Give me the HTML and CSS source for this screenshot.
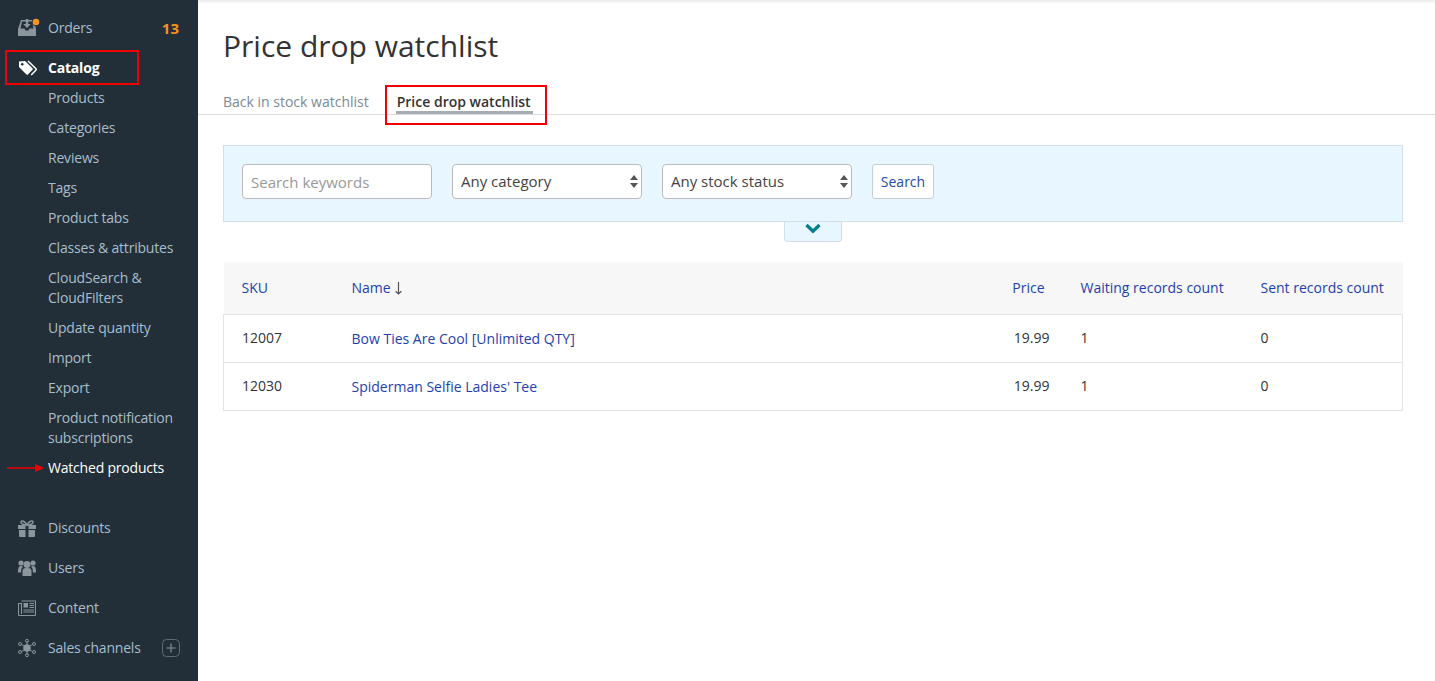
FILE: index.html
```html
<!DOCTYPE html>
<html lang="en">
<head>
<meta charset="UTF-8" />
<title>Price drop watchlist</title>
<link rel="stylesheet" href="styles.css">
</head>
<body>

<div class="layout">
  <nav class="sidebar">
    <div class="nav-item">
      <span class="nav-icon">
        <svg width="22" height="20" viewBox="0 0 22 20"><path fill="#8a959c" d="M0 18V11L3 2H16L18 11V18Z"/><path fill="#232f38" d="M4 3.500H14L15.500 10.500H11.500L10.500 12.500H7.500L6.500 10.500H2.500Z"/><path fill="#8a959c" d="M7.800 1H10.200V6H12.800L9 10 5.200 6H7.800Z"/><circle cx="18" cy="4" r="4.300" fill="#232f38"/><circle cx="18" cy="4" r="3.300" fill="#f7931e"/></svg>
      </span>
      <span>Orders</span>
      <span class="nav-count">13</span>
    </div>
    <div class="nav-item active">
      <span class="nav-icon">
        <svg width="20" height="16" viewBox="0 0 20 16"><path fill="#fff" d="M1 1.500 7 1l7.500 7.300a1 1 0 0 1 0 1.400l-4.600 4.800a1 1 0 0 1-1.400 0L1 7z"/><path fill="none" stroke="#fff" stroke-width="1.500" d="M10 1l8 7.700a1 1 0 0 1 0 1.300l-4.800 5"/><circle cx="4.200" cy="4.300" r="1.300" fill="#232f38"/></svg>
      </span>
      <span>Catalog</span>
    </div>
    <ul class="subnav">
      <li>Products</li>
      <li>Categories</li>
      <li>Reviews</li>
      <li>Tags</li>
      <li>Product tabs</li>
      <li>Classes &amp; attributes</li>
      <li>CloudSearch &amp; CloudFilters</li>
      <li>Update quantity</li>
      <li>Import</li>
      <li>Export</li>
      <li>Product notification subscriptions</li>
      <li class="current">Watched products</li>
    </ul>
    <div class="nav-item">
      <span class="nav-icon">
        <svg width="18" height="17" viewBox="0 0 18 17"><path fill="#8a959c" d="M0 5h7.500v4H0z M10.500 5H18v4h-7.500z M1 10h6.500v7H2a1 1 0 0 1-1-1z M10.500 10H17v6a1 1 0 0 1-1 1h-5.500z"/><path fill="none" stroke="#8a959c" stroke-width="1.500" d="M9 5C7 1 3.500 0 3 2s3 3 6 3c3 0 6.500-1 6-3S11 1 9 5z"/></svg>
      </span>
      <span>Discounts</span>
    </div>
    <div class="nav-item">
      <span class="nav-icon">
        <svg width="18" height="16" viewBox="0 0 18 16"><g fill="#8a959c"><circle cx="9" cy="4.500" r="3.500"/><circle cx="3" cy="3" r="2.600"/><circle cx="15" cy="3" r="2.600"/><path d="M4.500 16V11c0-1.800 1.500-3 3-3h3c1.500 0 3 1.200 3 3v5z"/><path d="M0 10.500C0 8 1 6 3 6c.8 0 1.500.3 2 .8-1 .7-1.800 2.200-1.800 3.700v2H0z"/><path d="M18 10.500C18 8 17 6 15 6c-.8 0-1.500.3-2 .8 1 .7 1.800 2.200 1.800 3.700v2H18z"/></g></svg>
      </span>
      <span>Users</span>
    </div>
    <div class="nav-item">
      <span class="nav-icon">
        <svg width="18" height="16" viewBox="0 0 18 16"><path fill="none" stroke="#8a959c" stroke-width="1.100" d="M3.500 1H17.500V14.500a1 1 0 0 1-1 1H1.500a1 1 0 0 1-1-1V3.500H3.500V14"/><path fill="#8a959c" d="M5.500 3H10v4.500H5.500z M11.500 3h4.500v1h-4.500z M11.500 5h4.500v1h-4.500z M11.500 7h4.500v1h-4.500z M5.500 9.500H16v1H5.500z M5.500 11.500H16v1H5.500z"/></svg>
      </span>
      <span>Content</span>
    </div>
    <div class="nav-item">
      <span class="nav-icon">
        <svg width="18" height="18" viewBox="0 0 18 18"><g stroke="#8a959c" stroke-width="1" fill="none"><path d="M9 9 9 2M9 9 9 16M9 9 3 5M9 9 15 5M9 9 3 13M9 9 15 13"/><circle cx="9" cy="1.800" r="1.500"/><circle cx="9" cy="16.200" r="1.500"/><circle cx="2" cy="5" r="1.500"/><circle cx="16" cy="5" r="1.500"/><circle cx="2" cy="13" r="1.500"/><circle cx="16" cy="13" r="1.500"/></g><circle cx="9" cy="9" r="3.800" fill="#8a959c"/></svg>
      </span>
      <span>Sales channels</span>
      <span class="nav-plus">
        <svg width="18" height="18" viewBox="0 0 18 18"><rect x=".5" y=".5" width="17" height="17" rx="4" fill="none" stroke="#5f6b73"/><path stroke="#6c7780" stroke-width="1.600" d="M9 4.500v9M4.500 9h9"/></svg>
      </span>
    </div>
  </nav>

  <main class="content">
    <h1 class="page-title">Price drop watchlist</h1>
    <div class="tabs">
      <a class="tab">Back in stock watchlist</a>
      <a class="tab tab-active">Price drop watchlist</a>
    </div>

    <div class="filters">
      <input class="field" type="text" placeholder="Search keywords">
      <div class="field select">Any category<span class="select-arrows"></span></div>
      <div class="field select">Any stock status<span class="select-arrows"></span></div>
      <button class="btn-search">Search</button>
    </div>
    <div class="filters-toggle">
      <svg width="16" height="11" viewBox="0 0 16 11"><path fill="none" stroke="#047d90" stroke-width="3.200" d="M1.500 2 8 8.200 14.500 2"/></svg>
    </div>

    <table class="data">
      <thead>
        <tr>
          <th class="col-sku">SKU</th>
          <th class="col-name">Name <svg class="sort-arrow" width="7" height="13" viewBox="0 0 7 13"><path fill="none" stroke="#555" stroke-width="1.200" d="M3.500 0v12M.6 9.200 3.500 12 6.400 9.200"/></svg></th>
          <th class="col-price">Price</th>
          <th class="col-wait">Waiting records count</th>
          <th class="col-sent">Sent records count</th>
        </tr>
      </thead>
      <tbody>
        <tr>
          <td>12007</td>
          <td class="link-cell"><a>Bow Ties Are Cool [Unlimited QTY]</a></td>
          <td class="num">19.99</td>
          <td>1</td>
          <td>0</td>
        </tr>
        <tr>
          <td>12030</td>
          <td class="link-cell"><a>Spiderman Selfie Ladies' Tee</a></td>
          <td class="num">19.99</td>
          <td>1</td>
          <td>0</td>
        </tr>
      </tbody>
    </table>
  </main>
</div>

<!-- Red marks drawn over the screenshot -->
<div class="mark mark-catalog"></div>
<div class="mark mark-tab"></div>
<svg class="mark-arrow" width="38" height="10" viewBox="0 0 38 10"><path stroke="#f00000" stroke-width="1.500" d="M0 5h30"/><path fill="#f00000" d="M28 1l9 4-9 4z"/></svg>

</body>
</html>
```

FILE: styles.css
```css
html, body {
  margin: 0;
  padding: 0;
  height: 100%;
  overflow: hidden;
}
body {
  font-family: "Open Sans", sans-serif;
  font-size: 14px;
  line-height: 20px;
  color: #333;
  background: #fff;
  position: relative;
}
.layout {
  display: flex;
  height: 681px;
}

/* Sidebar */
.sidebar {
  width: 198px;
  flex-shrink: 0;
  background: #232f38;
  color: #a7bdcc;
  padding-top: 8px;
  box-sizing: border-box;
  letter-spacing: -0.2px;
}
.nav-item {
  display: flex;
  align-items: center;
  height: 40px;
  padding-left: 18px;
}
.nav-icon {
  width: 30px;
  display: flex;
  align-items: center;
}
.nav-item.active {
  color: #fff;
  font-weight: 700;
}
.nav-count {
  margin-left: auto;
  margin-right: 19px;
  color: #f7931e;
  font-weight: 700;
  font-size: 15px;
  letter-spacing: 0;
}
.nav-plus {
  margin-left: auto;
  margin-right: 18px;
  display: flex;
}
.subnav {
  list-style: none;
  margin: -5px 0 25px 0;
  padding: 0 20px 0 48px;
}
.subnav li {
  padding: 5px 0;
}
.subnav li.current {
  color: #fff;
}

/* Main */
.content {
  flex: 1;
  box-shadow: inset 0 4px 4px -3px rgba(0,0,0,0.12);
}
.page-title {
  margin: 0;
  padding: 26px 25px 0 25px;
  font-size: 30px;
  line-height: 40px;
  font-weight: 400;
  color: #333;
}
.tabs {
  display: flex;
  gap: 27px;
  margin-top: 16px;
  padding: 0 25px;
  height: 32px;
  border-bottom: 1px solid #d9dcde;
}
.tab {
  color: #7a8a96;
  height: 32px;
  padding-top: 10px;
  box-sizing: border-box;
  line-height: 20px;
}
.tab-active {
  color: #333;
  font-weight: 600;
  padding: 10px 2px 0 1px;
  border-bottom: 3px solid #a5adb2;
}

/* Filters */
.filters {
  margin: 30px 32px 0 25px;
  height: 77px;
  box-sizing: border-box;
  background: #e7f6ff;
  border: 1px solid #cfe0ea;
  padding: 18px;
  display: flex;
  gap: 20px;
}
.field {
  width: 190px;
  height: 35px;
  box-sizing: border-box;
  background: #fff;
  border: 1px solid #bbb;
  border-radius: 4px;
  font-family: inherit;
  font-size: 15px;
  padding: 0 8px;
  color: #444;
  outline: none;
}
.field::placeholder {
  color: #999;
  opacity: 1;
}
.select {
  display: flex;
  align-items: center;
  position: relative;
  padding-bottom: 2px;
}
.select-arrows {
  position: absolute;
  right: 3px;
  top: 10px;
  width: 0;
  height: 0;
  border-left: 4px solid transparent;
  border-right: 4px solid transparent;
  border-bottom: 5px solid #555;
}
.select-arrows::after {
  content: "";
  position: absolute;
  left: -4px;
  top: 8px;
  border-left: 4px solid transparent;
  border-right: 4px solid transparent;
  border-top: 5px solid #555;
}
.btn-search {
  height: 35px;
  width: 62px;
  padding: 0;
  background: #fff;
  border: 1px solid #c4cdd2;
  border-radius: 3px;
  font-family: inherit;
  font-size: 14px;
  color: #1e4aa8;
}
.filters-toggle {
  width: 58px;
  height: 20px;
  box-sizing: border-box;
  margin-left: 586px;
  background: #e7f6ff;
  border: 1px solid #cfe0ea;
  border-top: 0;
  border-radius: 0 0 4px 4px;
  display: flex;
  justify-content: center;
  padding-top: 1px;
}

/* Table */
table.data {
  margin: 20px 0 0 25px;
  width: 1180px;
  border-collapse: collapse;
  table-layout: fixed;
}
.data a {
  color: #1e3fae;
}
.data th,
.data td {
  box-sizing: border-box;
}
.data th {
  background: #f7f7f7;
  height: 52px;
  padding: 0 0 0 18px;
  text-align: left;
  font-weight: 400;
  color: #1e3fae;
  border-bottom: 1px solid #e3e3e3;
}
.col-sku { width: 110px; }
.col-price { width: 118px; }
.col-wait { width: 180px; }
.col-sent { width: 160px; }
.data th.col-price {
  text-align: right;
  padding-right: 18px;
}
.sort-arrow {
  vertical-align: -2px;
  margin-left: 1px;
}
.data td {
  height: 48px;
  padding: 0 0 0 18px;
  color: #333;
  border-bottom: 1px solid #e3e3e3;
}
.data td.link-cell {
  padding-top: 2px;
}
.data td:first-child {
  border-left: 1px solid #e3e3e3;
}
.data td:last-child {
  border-right: 1px solid #e3e3e3;
}
.data td.num {
  text-align: right;
  padding-right: 13px;
}

/* Red annotation marks */
.mark {
  position: absolute;
  border: 2px solid #f00000;
  box-sizing: border-box;
}
.mark-catalog {
  left: 5px;
  top: 50px;
  width: 134px;
  height: 35px;
}
.mark-tab {
  left: 385px;
  top: 85px;
  width: 162px;
  height: 40px;
}
.mark-arrow {
  position: absolute;
  left: 7px;
  top: 463px;
}
```
